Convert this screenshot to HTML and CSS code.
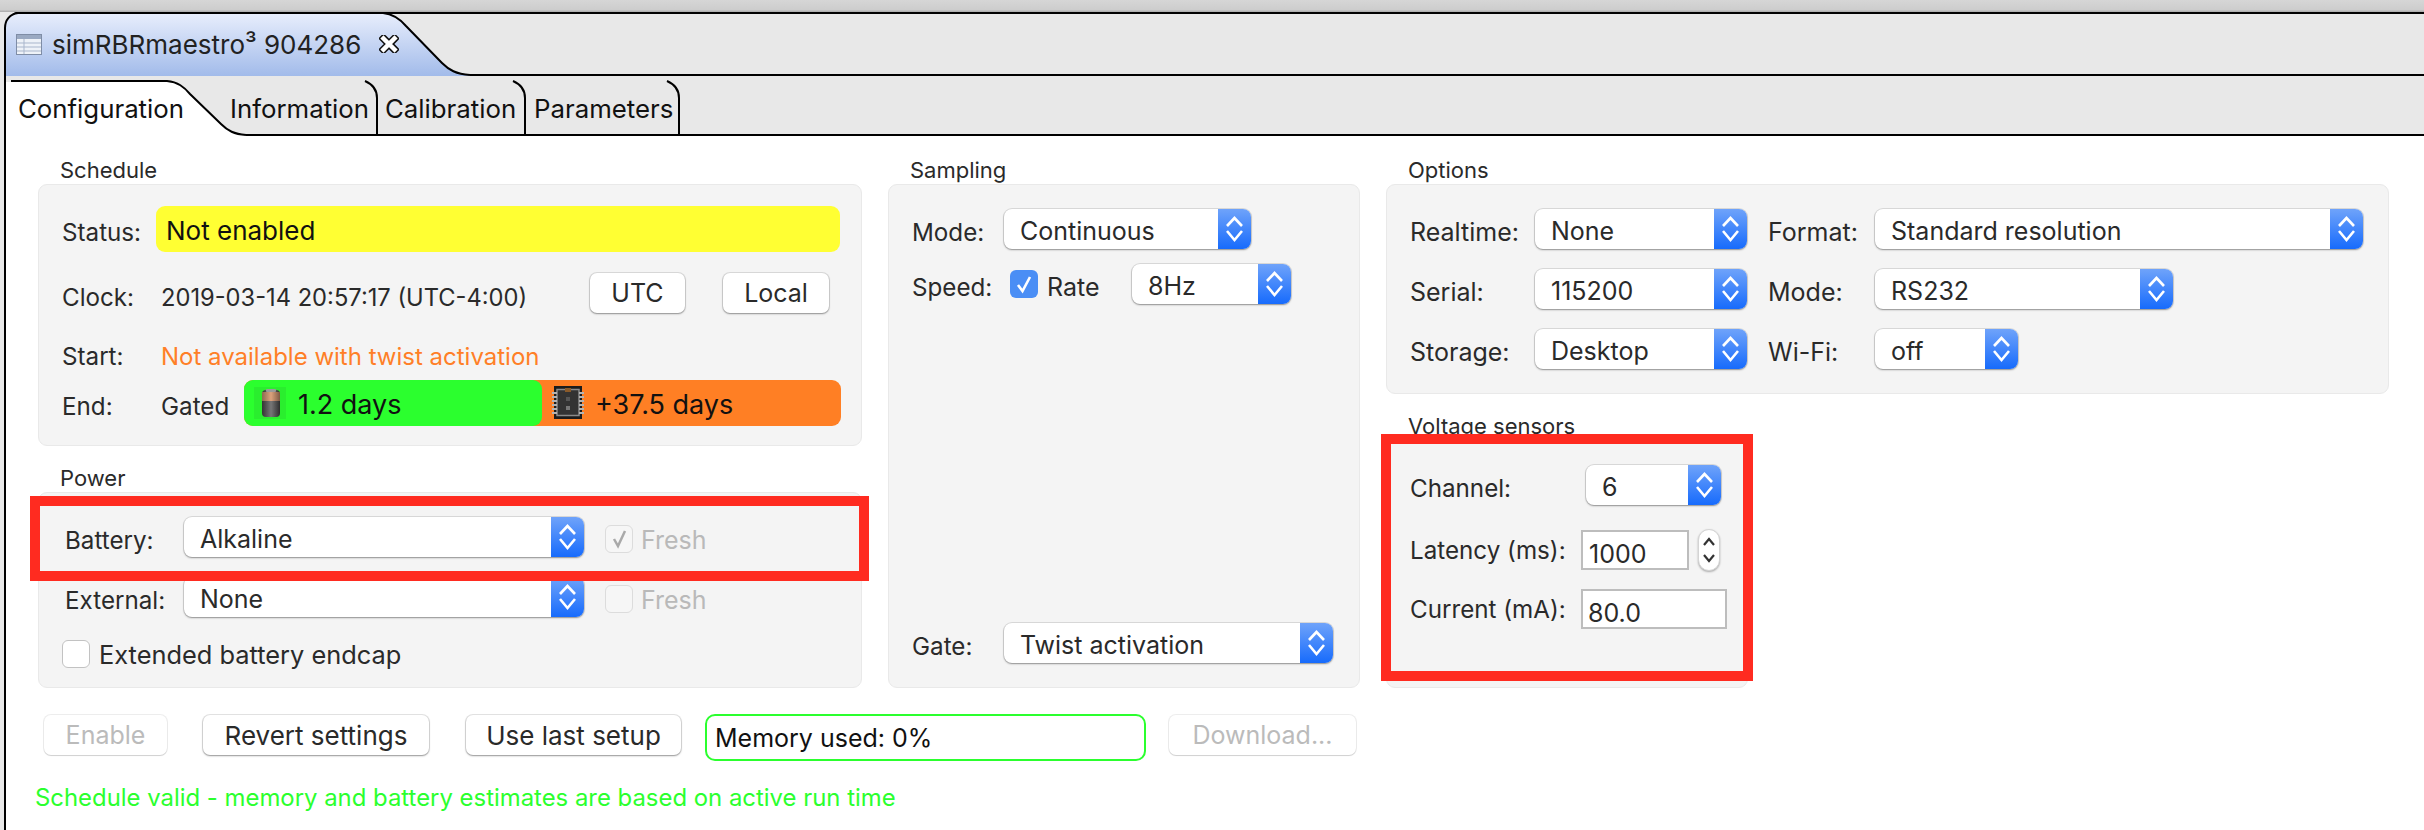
FILE: index.html
```html
<!DOCTYPE html>
<html lang="en">
<head>
  <meta charset="UTF-8">
  <title>simRBRmaestro3 904286</title>
  <link rel="stylesheet" href="styles.css">
</head>
<body>
  <svg class="defs" width="0" height="0">
    <symbol id="updown" viewBox="0 0 33 40">
      <path d="M9 17L16.5 9L24 17M9 22L16.5 31L24 22" fill="none" stroke="#fff" stroke-width="2.6"/>
    </symbol>
  </svg>

  <div class="app">
    <div class="title-strip"></div>

    <div class="editor-tabs">
      <svg class="tab-shape" width="480" height="64" viewBox="0 12 480 64">
        <defs>
          <linearGradient id="activeTab" x1="0" y1="0" x2="0" y2="1">
            <stop offset="0" stop-color="#e8eefc"/>
            <stop offset="1" stop-color="#a2bbea"/>
          </linearGradient>
        </defs>
        <path d="M0 12H16C9 15 5 21 5 28V76H0Z" fill="#e8e8e8"/>
        <path d="M5 76V28C5 20 10 14 18 13H383C393 14 400 19 406 26L442 63C449 70 456 74 470 75V76Z" fill="url(#activeTab)"/>
        <path d="M5 76V28C5 20 10 14 18 13H383C393 14 400 19 406 26L442 63C449 70 456 74 470 75" fill="none" stroke="#000" stroke-width="2"/>
      </svg>
      <svg class="doc-icon" width="26" height="21" viewBox="0 0 26 21">
        <rect x="0.5" y="0.5" width="25" height="20" fill="#eef2f8" stroke="#7f8da6"/>
        <rect x="1" y="1" width="24" height="4" fill="#9aa9c2"/>
        <path d="M1 9H25M1 13H25M1 17H25M8 5V20" stroke="#a9b6cc" fill="none"/>
      </svg>
      <span class="editor-title">simRBRmaestro³ 904286</span>
      <svg class="close-icon" width="20" height="18" viewBox="0 0 20 18">
        <path d="M4.5 3.5L15.5 14.5M15.5 3.5L4.5 14.5" stroke="#111" stroke-width="7.5" stroke-linecap="square"/>
        <path d="M4.5 3.5L15.5 14.5M15.5 3.5L4.5 14.5" stroke="#fff" stroke-width="4.5" stroke-linecap="square"/>
      </svg>
    </div>

    <div class="window">
      <div class="subtabs">
        <svg class="tab-shape" width="700" height="60" viewBox="6 76 700 60">
          <path d="M6 136V82H167C178 82 184 87 190 94L221 124C228 131 234 134 246 135V136Z" fill="#fff"/>
          <path d="M11 81H167C178 82 184 87 190 94L221 124C228 131 234 134 246 135" fill="none" stroke="#000" stroke-width="2"/>
          <path d="M365 81C372 84 377 90 377 98V134M513 81C520 84 525 90 525 98V134M667 81C674 84 679 90 679 98V134" fill="none" stroke="#000" stroke-width="2"/>
        </svg>
        <span class="subtab subtab-config">Configuration</span>
        <span class="subtab subtab-info">Information</span>
        <span class="subtab subtab-calib">Calibration</span>
        <span class="subtab">Parameters</span>
      </div>

      <div class="content">
        <div class="columns">

          <div class="column">
            <section class="group">
              <h2 class="group-title">Schedule</h2>
              <div class="panel panel-schedule">
                <div class="row row-status">
                  <span class="label label-status">Status:</span>
                  <div class="status-field">Not enabled</div>
                </div>
                <div class="row row-clock">
                  <span class="label label-sched">Clock:</span>
                  <span class="clock-value">2019-03-14 20:57:17 (UTC-4:00)</span>
                  <button class="btn btn-utc">UTC</button>
                  <button class="btn btn-local">Local</button>
                </div>
                <div class="row row-start">
                  <span class="label label-sched">Start:</span>
                  <span class="warn-text">Not available with twist activation</span>
                </div>
                <div class="row row-end">
                  <span class="label label-sched">End:</span>
                  <span class="gated">Gated</span>
                  <div class="endurance">
                    <div class="endurance-battery">
                      <svg class="battery-icon" width="32" height="32" viewBox="0 0 32 32">
                        <defs>
                          <linearGradient id="batteryBody" x1="0" y1="0" x2="1" y2="0">
                            <stop offset="0" stop-color="#333"/>
                            <stop offset="0.5" stop-color="#777"/>
                            <stop offset="1" stop-color="#2e2e2e"/>
                          </linearGradient>
                          <linearGradient id="batteryCap" x1="0" y1="0" x2="1" y2="0">
                            <stop offset="0" stop-color="#8a6a50"/>
                            <stop offset="0.5" stop-color="#dca27c"/>
                            <stop offset="1" stop-color="#7a5a44"/>
                          </linearGradient>
                        </defs>
                        <rect width="32" height="32" fill="#2aee2e"/>
                        <rect x="8" y="3" width="18" height="27" rx="4" fill="url(#batteryBody)"/>
                        <rect x="8" y="5" width="18" height="9" fill="url(#batteryCap)"/>
                        <rect x="12" y="2" width="10" height="3" rx="1" fill="#9a9a9a"/>
                      </svg>
                      <span>1.2 days</span>
                    </div>
                    <div class="endurance-memory">
                      <svg class="chip-icon" width="32" height="34" viewBox="0 0 32 34">
                        <rect x="2" y="0" width="28" height="33" fill="#1c1c1c"/>
                        <rect x="5" y="3.5" width="22" height="26" fill="#333" stroke="#8a8a8a" stroke-width="1.5"/>
                        <path d="M0 7H5M0 11H5M0 15H5M0 19H5M0 23H5M0 27H5M27 7H32M27 11H32M27 15H32M27 19H32M27 23H32M27 27H32" stroke="#b4b4b4" stroke-width="2"/>
                        <rect x="13" y="2" width="6" height="4" fill="#8a5a2a"/>
                        <rect x="14" y="11" width="4" height="4" fill="#555"/>
                        <rect x="14" y="20" width="4" height="4" fill="#777"/>
                      </svg>
                      <span>+37.5 days</span>
                    </div>
                  </div>
                </div>
              </div>
            </section>

            <section class="group group-power">
              <h2 class="group-title">Power</h2>
              <div class="panel panel-power">
                <div class="row">
                  <span class="label label-power">Battery:</span>
                  <div class="select sel-power"><span>Alkaline</span><i class="arrows"><svg width="33" height="40"><use href="#updown"/></svg></i></div>
                  <span class="check check-off"><svg width="26" height="26" viewBox="0 0 26 26"><path d="M8 13L12 20L19 5" fill="none" stroke="#a9a9a9" stroke-width="2.5"/></svg></span>
                  <span class="fresh">Fresh</span>
                </div>
                <div class="row row-external">
                  <span class="label label-power">External:</span>
                  <div class="select sel-power"><span>None</span><i class="arrows"><svg width="33" height="40"><use href="#updown"/></svg></i></div>
                  <span class="check check-off"></span>
                  <span class="fresh">Fresh</span>
                </div>
                <div class="row row-endcap">
                  <span class="check"></span>
                  <span class="label">Extended battery endcap</span>
                </div>
              </div>
            </section>
          </div>

          <div class="column">
            <section class="group group-fill">
              <h2 class="group-title title-sampling">Sampling</h2>
              <div class="panel panel-sampling">
                <div class="row">
                  <span class="label label-sampling">Mode:</span>
                  <div class="select sel-mode"><span>Continuous</span><i class="arrows"><svg width="33" height="40"><use href="#updown"/></svg></i></div>
                </div>
                <div class="row row-speed">
                  <span class="label label-speed">Speed:</span>
                  <span class="check check-on"><svg width="28" height="28" viewBox="0 0 28 28"><path d="M8 15L12.5 21L20 7" fill="none" stroke="#fff" stroke-width="2.6"/></svg></span>
                  <span class="label label-rate">Rate</span>
                  <div class="select sel-rate"><span>8Hz</span><i class="arrows"><svg width="33" height="40"><use href="#updown"/></svg></i></div>
                </div>
                <div class="row row-gate">
                  <span class="label label-gate">Gate:</span>
                  <div class="select sel-gate"><span>Twist activation</span><i class="arrows"><svg width="33" height="40"><use href="#updown"/></svg></i></div>
                </div>
              </div>
            </section>
          </div>

          <div class="column">
            <section class="group">
              <h2 class="group-title">Options</h2>
              <div class="panel panel-options">
                <div class="row">
                  <span class="label label-opt">Realtime:</span>
                  <div class="select sel-opt"><span>None</span><i class="arrows"><svg width="33" height="40"><use href="#updown"/></svg></i></div>
                  <span class="label label-opt2">Format:</span>
                  <div class="select sel-format"><span>Standard resolution</span><i class="arrows"><svg width="33" height="40"><use href="#updown"/></svg></i></div>
                </div>
                <div class="row">
                  <span class="label label-opt">Serial:</span>
                  <div class="select sel-opt"><span>115200</span><i class="arrows"><svg width="33" height="40"><use href="#updown"/></svg></i></div>
                  <span class="label label-opt2">Mode:</span>
                  <div class="select sel-serial"><span>RS232</span><i class="arrows"><svg width="33" height="40"><use href="#updown"/></svg></i></div>
                </div>
                <div class="row">
                  <span class="label label-opt">Storage:</span>
                  <div class="select sel-opt"><span>Desktop</span><i class="arrows"><svg width="33" height="40"><use href="#updown"/></svg></i></div>
                  <span class="label label-opt2">Wi-Fi:</span>
                  <div class="select sel-wifi"><span>off</span><i class="arrows"><svg width="33" height="40"><use href="#updown"/></svg></i></div>
                </div>
              </div>
            </section>

            <section class="group group-voltage">
              <h2 class="group-title">Voltage sensors</h2>
              <div class="panel panel-voltage">
                <div class="row">
                  <span class="label label-volt">Channel:</span>
                  <div class="select sel-channel"><span>6</span><i class="arrows"><svg width="33" height="40"><use href="#updown"/></svg></i></div>
                </div>
                <div class="row row-latency">
                  <span class="label label-volt">Latency (ms):</span>
                  <div class="input input-latency">1000</div>
                  <span class="stepper"><svg width="22" height="42" viewBox="0 0 22 42"><path d="M6 16L11 10L16 16M6 26L11 32L16 26" fill="none" stroke="#333" stroke-width="2.2"/></svg></span>
                </div>
                <div class="row row-current">
                  <span class="label label-volt">Current (mA):</span>
                  <div class="input input-current">80.0</div>
                </div>
              </div>
            </section>
          </div>
        </div>

        <div class="actions">
          <button class="btn btn-enable" disabled>Enable</button>
          <button class="btn btn-revert">Revert settings</button>
          <button class="btn btn-last">Use last setup</button>
          <div class="memory">Memory used: 0%</div>
          <button class="btn btn-download" disabled>Download...</button>
        </div>
        <p class="valid-msg">Schedule valid - memory and battery estimates are based on active run time</p>
      </div>
    </div>

    <div class="callout callout-battery"></div>
    <div class="callout callout-voltage"></div>
  </div>
</body>
</html>
```

FILE: styles.css
```css
* {
  box-sizing: border-box;
}

body {
  margin: 0;
  background: #e8e8e8;
  font-family: Inter, "Noto Sans", sans-serif;
  font-size: 25px;
  color: #2a2a2a;
}

.defs {
  position: absolute;
}

.app {
  position: relative;
  width: 2424px;
  height: 830px;
  overflow: hidden;
}

.title-strip {
  height: 12px;
  background: linear-gradient(#d6d6d6, #cdcdcd 80%, #a8a8a8);
}

/* editor tab bar */
.editor-tabs {
  position: relative;
  display: flex;
  align-items: center;
  height: 64px;
  padding-left: 16px;
  background: #e8e8e8;
  border-top: 2px solid #000;
  border-bottom: 2px solid #000;
}

.tab-shape {
  position: absolute;
  left: 0;
  top: -2px;
}

.doc-icon,
.close-icon,
.editor-title {
  position: relative;
}

.editor-title {
  margin-left: 10px;
  font-size: 26px;
  color: #222;
}

.close-icon {
  margin-left: 18px;
}

/* main window */
.window {
  margin-left: 4px;
  height: 754px;
  background: #fff;
  border-left: 2px solid #000;
}

.subtabs {
  position: relative;
  display: flex;
  align-items: center;
  height: 60px;
  padding-left: 12px;
  padding-top: 6px;
  background: #e8e8e8;
  border-bottom: 2px solid #000;
}

.subtabs .tab-shape {
  top: 0;
}

.subtab {
  position: relative;
  font-size: 25.8px;
  color: #111;
}

.subtab-config {
  width: 212px;
}

.subtab-info {
  width: 155px;
}

.subtab-calib {
  width: 149px;
}

.content {
  padding: 22px 0 0 32px;
}

.columns {
  display: grid;
  grid-template-columns: 824px 472px 1003px;
  column-gap: 26px;
}

.column {
  display: flex;
  flex-direction: column;
}

.group-fill {
  display: flex;
  flex-direction: column;
  flex: 1;
}

.group-power,
.group-voltage {
  margin-top: 20px;
}

.group-title {
  margin: 0;
  height: 26px;
  padding-left: 22px;
  font-size: 22px;
  font-weight: 400;
  line-height: 24px;
}

.title-sampling {
  padding-left: 22px;
}

.panel {
  background: #f4f4f4;
  border: 1px solid #e9e9e9;
  border-radius: 9px;
}

.row {
  display: flex;
  align-items: center;
}

.label {
  flex: none;
  padding-top: 6px;
  font-size: 24.2px;
}

/* schedule */
.panel-schedule {
  height: 262px;
  padding: 21px 0 0 23px;
}

.label-status {
  width: 94px;
}

.label-sched {
  width: 99px;
}

.status-field {
  width: 684px;
  height: 46px;
  padding-left: 10px;
  font-size: 26px;
  line-height: 50px;
  background: #ffff33;
  border-radius: 9px;
  color: #111;
}

.row-clock {
  height: 38px;
  margin-top: 22px;
}

.row-clock .label,
.clock-value {
  padding-top: 8px;
}

.clock-value {
  width: 429px;
  font-size: 23.7px;
}

.btn-utc {
  width: 95px;
}

.btn-local {
  width: 106px;
  margin-left: 38px;
}

.row-start {
  height: 30px;
  margin-top: 29px;
}

.row-start .label {
  padding-top: 0;
}

.warn-text {
  font-size: 24px;
  color: #ff7f27;
}

.row-end {
  margin-top: 9px;
}

.gated {
  width: 83px;
  padding-top: 6px;
  font-size: 24.2px;
}

.endurance {
  display: flex;
  width: 597px;
  height: 46px;
  font-size: 27px;
  background: #ff7f24;
  border-radius: 9px;
  color: #111;
}

.endurance-battery {
  display: flex;
  align-items: center;
  width: 298px;
  padding-left: 10px;
  background: #2bff2e;
  border-radius: 9px;
}

.endurance-memory {
  display: flex;
  align-items: center;
  padding-left: 10px;
}

.endurance span {
  margin-left: 12px;
  padding-top: 2px;
}

.endurance-memory span {
  margin-left: 11px;
}

/* power */
.panel-power {
  height: 196px;
  padding: 24px 0 0 26px;
}

.label-power {
  width: 119px;
}

.sel-power {
  width: 400px;
  margin-right: 21px;
}

.row-external {
  margin-top: 20px;
}

.row-endcap {
  margin-top: 21px;
  margin-left: -3px;
}

.row-endcap .label {
  margin-left: 9px;
  padding-top: 1px;
  font-size: 25.4px;
}

.fresh {
  margin-left: 8px;
  padding-top: 6px;
  color: #b9b9b9;
}

/* sampling */
.panel-sampling {
  flex: 1;
  padding: 24px 0 0 23px;
}

.label-sampling {
  width: 92px;
}

.sel-mode {
  width: 247px;
}

.row-speed {
  margin-top: 15px;
}

.label-speed {
  width: 98px;
}

.label-rate {
  width: 85px;
  margin-left: 9px;
  font-size: 25px;
}

.sel-rate {
  width: 159px;
  line-height: 42px;
}

.row-gate {
  margin-top: 319px;
}

.label-gate {
  width: 92px;
}

.sel-gate {
  width: 329px;
}

/* options */
.panel-options {
  display: flex;
  flex-direction: column;
  gap: 20px;
  height: 210px;
  padding: 24px 0 0 23px;
}

.label-opt,
.label-opt2 {
  font-size: 25px;
}

.label-opt {
  width: 125px;
}

.sel-opt {
  width: 212px;
  margin-right: 21px;
}

.label-opt2 {
  width: 107px;
}

.sel-format {
  width: 488px;
}

.sel-serial {
  width: 298px;
}

.sel-wifi {
  width: 143px;
}

/* voltage */
.panel-voltage {
  width: 362px;
  height: 248px;
  padding: 24px 0 0 23px;
}

.label-volt {
  width: 171px;
}

.row-latency .label-volt,
.row-current .label-volt {
  padding-top: 0;
}

.sel-channel {
  width: 135px;
  margin-left: 5px;
}

.row-latency {
  margin-top: 24px;
}

.row-current {
  margin-top: 18px;
}

.input {
  height: 40px;
  line-height: 40px;
  padding-top: 2px;
  background: #fff;
  border: 2px solid #bdbdbd;
}

.input-latency {
  width: 108px;
  padding-left: 6px;
}

.input-current {
  width: 146px;
  padding-left: 5px;
}

.stepper {
  display: block;
  width: 22px;
  height: 42px;
  margin-left: 9px;
  background: #fff;
  border: 1px solid #d4d4d4;
  border-radius: 11px;
  box-shadow: 0 1px 2px rgba(0, 0, 0, 0.3);
}

.stepper svg {
  display: block;
  margin: -1px;
}

/* controls */
.select {
  display: flex;
  flex: none;
  justify-content: space-between;
  height: 40px;
  padding-left: 16px;
  line-height: 45px;
  background: #fff;
  border-radius: 8px;
  box-shadow: 0 0 0 1px rgba(0, 0, 0, 0.1), 0 1px 2px rgba(0, 0, 0, 0.35);
}

.arrows {
  display: block;
  width: 33px;
  height: 40px;
  background: linear-gradient(#6fa3fa, #176bfc);
  border-radius: 0 8px 8px 0;
}

.arrows svg {
  display: block;
}

.check {
  flex: none;
  display: block;
  width: 28px;
  height: 28px;
  background: #fff;
  border: 1px solid #c2c2c2;
  border-radius: 6px;
}

.check svg {
  display: block;
}

.check-off {
  margin-top: 4px;
  background: #f6f6f6;
  border-color: #dcdcdc;
}

.check-on {
  background: #4a8ef5;
  border: none;
}

.btn {
  height: 40px;
  padding: 0;
  font: inherit;
  color: #2a2a2a;
  background: #fff;
  border: none;
  border-radius: 7px;
  box-shadow: 0 0 0 1px rgba(0, 0, 0, 0.1), 0 1px 2px rgba(0, 0, 0, 0.35);
}

.btn:disabled {
  color: #bbb;
  box-shadow: 0 0 0 1px rgba(0, 0, 0, 0.07), 0 1px 1px rgba(0, 0, 0, 0.12);
}

/* bottom */
.actions {
  display: flex;
  align-items: flex-start;
  margin: 26px 0 0 6px;
}

.actions .btn {
  margin-top: 1px;
}

.btn-enable {
  width: 123px;
}

.btn-revert {
  width: 226px;
  margin-left: 36px;
  font-size: 26px;
}

.btn-last {
  width: 215px;
  margin-left: 37px;
  font-size: 26px;
}

.memory {
  width: 441px;
  height: 47px;
  margin-left: 24px;
  padding-left: 8px;
  line-height: 44px;
  color: #111;
  background: #fff;
  border: 2px solid #2bff2e;
  border-radius: 10px;
}

.btn-download {
  width: 187px;
  margin-left: 23px;
}

.valid-msg {
  margin: 22px 0 0 -3px;
  font-size: 23.9px;
  color: #2bff2e;
}

/* red highlight boxes drawn over the screenshot */
.callout {
  position: absolute;
  border: 10px solid #ff2b20;
}

.callout-battery {
  left: 30px;
  top: 496px;
  width: 839px;
  height: 85px;
}

.callout-voltage {
  left: 1381px;
  top: 434px;
  width: 372px;
  height: 247px;
}
```
